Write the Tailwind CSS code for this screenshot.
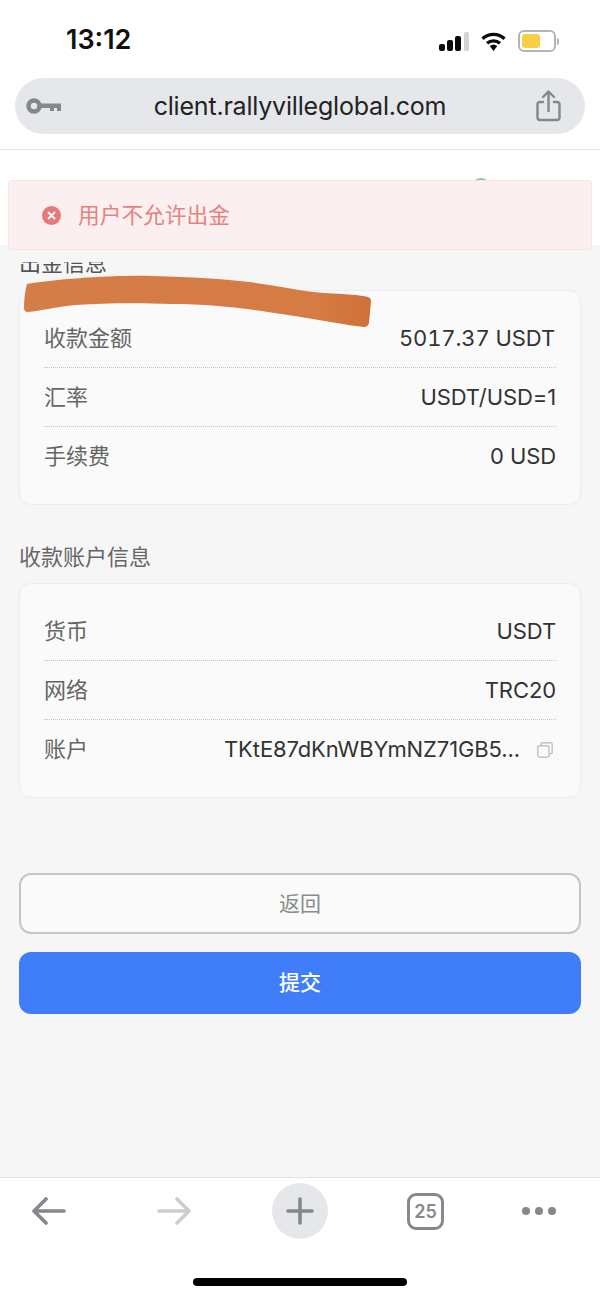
<!DOCTYPE html>
<html lang="zh-CN">
<head>
<meta charset="utf-8"/>
<meta name="viewport" content="width=device-width, initial-scale=1"/>
<title>出金信息</title>
<script src="https://cdn.jsdelivr.net/npm/@tailwindcss/browser@4"></script>
</head>
<body class="relative w-[600px] h-[1298px] overflow-hidden bg-white flex flex-col font-['Inter','Noto_Sans_CJK_SC',sans-serif] text-[#333]">

  <!-- browser chrome, top -->
  <header class="h-[150px] shrink-0 border-b border-[#e4e4e4] px-[15px]">
    <div class="h-[78px] flex items-start justify-between">
      <span class="mt-[24px] ml-[51px] text-[27px] leading-[32px] font-semibold text-[#111]">13:12</span>
      <div class="mt-[30px] mr-[26px] flex items-center gap-[12px]">
        <svg class="w-[30px] h-[19px]" viewBox="0 0 30 19">
          <rect x="0" y="12" width="6" height="7" rx="2" fill="#0b0b0b"/>
          <rect x="8" y="8" width="6" height="11" rx="2" fill="#0b0b0b"/>
          <rect x="16" y="4" width="6" height="15" rx="2" fill="#0b0b0b"/>
          <rect x="25" y="0" width="5" height="19" rx="1.5" fill="#d4d4d4"/>
        </svg>
        <svg class="w-[25px] h-[19px]" viewBox="0 0 25 19">
          <path d="M1.5 6.8 A16 16 0 0 1 23.5 6.8" fill="none" stroke="#0b0b0b" stroke-width="3.4"/>
          <path d="M6 11.3 A10 10 0 0 1 19 11.3" fill="none" stroke="#0b0b0b" stroke-width="3.4"/>
          <path d="M8.7 14 A6 6 0 0 1 16.3 14 L12.5 19 Z" fill="#0b0b0b"/>
        </svg>
        <div class="flex items-center gap-[1px]">
          <div class="w-[38px] h-[22px] rounded-[6px] border-2 border-[#b5b5b5] p-[2px] bg-white">
            <div class="w-[18px] h-full rounded-[3px] bg-[#f6cf47]"></div>
          </div>
          <div class="w-[2px] h-[7px] rounded-r bg-[#b5b5b5]"></div>
        </div>
      </div>
    </div>
    <div class="h-[56px] rounded-full bg-[#e6e7eb] flex items-center justify-between pl-[11px] pr-[24px]">
      <svg class="w-[35px] h-[16px]" viewBox="0 0 35 16">
        <circle cx="8" cy="8" r="5.5" fill="none" stroke="#84878b" stroke-width="4.5"/>
        <path d="M14 5.5 H35 V13 H31 V10 H28 V13 H24 V10 H14 Z" fill="#84878b"/>
      </svg>
      <span class="ml-[3px] text-[25px] leading-[32px] text-[#222] tracking-[-0.2px]">client.rallyvilleglobal.com</span>
      <svg class="w-[25px] h-[32px]" viewBox="0 0 25 32" fill="none" stroke="#84878b" stroke-width="2.4" stroke-linecap="round" stroke-linejoin="round">
        <path d="M7 12 H4 Q1.5 12 1.5 14.5 V27.5 Q1.5 30 4 30 H21 Q23.5 30 23.5 27.5 V14.5 Q23.5 12 21 12 H18"/>
        <path d="M12.5 21 V2 M7 7 L12.5 1.5 L18 7"/>
      </svg>
    </div>
  </header>

  <div class="h-[95px] shrink-0 bg-white"></div>

  <!-- page content -->
  <main class="relative flex-1 bg-[#f6f6f6] px-[19px] pt-[8px]">
    <h2 class="text-[22px] leading-[20px] font-normal text-[#555] mb-[17px]">出金信息</h2>
    <section class="h-[215px] rounded-[12px] border border-[#ececec] bg-[#fafafa] px-[24px] py-[18px]">
      <div class="h-[59px] flex items-center justify-between border-b border-dotted border-[#c4c4c4]">
        <span class="text-[22px] text-[#666]">收款金额</span>
        <span class="mr-[1px] text-[22px] tabular-nums tracking-[-0.1px] text-[#333]">5017.37 USDT</span>
      </div>
      <div class="h-[59px] flex items-center justify-between border-b border-dotted border-[#c4c4c4]">
        <span class="text-[22px] text-[#666]">汇率</span>
        <span class="text-[22px] tracking-[-0.1px] text-[#333]">USDT/USD=1</span>
      </div>
      <div class="h-[59px] flex items-center justify-between">
        <span class="text-[22px] text-[#666]">手续费</span>
        <span class="text-[22px] tracking-[-0.1px] text-[#333]">0 USD</span>
      </div>
    </section>

    <h2 class="mt-[42px] text-[22px] leading-[20px] font-normal text-[#666] mb-[16px]">收款账户信息</h2>
    <section class="h-[215px] rounded-[12px] border border-[#ececec] bg-[#fafafa] px-[24px] py-[18px]">
      <div class="h-[59px] flex items-center justify-between border-b border-dotted border-[#c4c4c4]">
        <span class="text-[22px] text-[#666]">货币</span>
        <span class="text-[22px] tracking-[-0.1px] text-[#333]">USDT</span>
      </div>
      <div class="h-[59px] flex items-center justify-between border-b border-dotted border-[#c4c4c4]">
        <span class="text-[22px] text-[#666]">网络</span>
        <span class="text-[22px] tracking-[-0.1px] text-[#333]">TRC20</span>
      </div>
      <div class="h-[59px] flex items-center justify-between">
        <span class="text-[22px] text-[#666]">账户</span>
        <div class="flex items-center gap-[17px] mr-[3px]">
          <span class="text-[22px] tracking-[-0.1px] text-[#333]">TKtE87dKnWBYmNZ71GB5...</span>
          <svg class="w-[16px] h-[16px]" viewBox="0 0 16 16" fill="none" stroke="#c2c2c2" stroke-width="1.4">
            <rect x="0.8" y="3.8" width="11.2" height="11.4" rx="2"/>
            <path d="M4 3.6 V2.6 Q4 0.8 5.8 0.8 H13.4 Q15.2 0.8 15.2 2.6 V10 Q15.2 11.8 13.4 11.8 H12.2"/>
          </svg>
        </div>
      </div>
    </section>

    <button class="mt-[75px] w-full h-[61px] rounded-[12px] border-2 border-[#c6c6c6] bg-[#fafafa] text-[21px] text-[#8c8c8c]">返回</button>
    <button class="mt-[18px] w-full h-[62px] rounded-[12px] bg-[#3f7ef8] text-[21px] font-medium text-white">提交</button>

    <!-- strip that hides the top of the first heading, as in the capture -->
    <div class="absolute left-0 top-0 w-[200px] h-[17px] bg-[#f6f6f6]"></div>
  </main>

  <!-- browser chrome, bottom -->
  <footer class="relative h-[121px] shrink-0 border-t border-[#e2e2e2] bg-white">
    <div class="h-[62px] mt-[2px] flex items-center pl-[32px]">
      <svg class="w-[34px] h-[28px]" viewBox="0 0 34 28" fill="none" stroke="#84878b" stroke-width="3.6" stroke-linecap="round" stroke-linejoin="round">
        <path d="M32 14 H3 M14 2 L2 14 L14 26"/>
      </svg>
      <svg class="w-[34px] h-[28px] ml-[91px]" viewBox="0 0 34 28" fill="none" stroke="#cdcdcd" stroke-width="3.6" stroke-linecap="round" stroke-linejoin="round">
        <path d="M2 14 H31 M20 2 L32 14 L20 26"/>
      </svg>
      <div class="w-[56px] h-[56px] ml-[81px] rounded-full bg-[#e6e7eb] flex items-center justify-center">
        <svg class="w-[28px] h-[28px]" viewBox="0 0 28 28" fill="none" stroke="#84878b" stroke-width="3.6" stroke-linecap="round">
          <path d="M14 2 V26 M2 14 H26"/>
        </svg>
      </div>
      <div class="w-[37px] h-[37px] ml-[79px] rounded-[9px] border-[3px] border-[#85888c] flex items-center justify-center text-[18px] font-semibold text-[#85888c]">25</div>
      <div class="ml-[78px] flex gap-[5px]">
        <span class="w-[8px] h-[8px] rounded-full bg-[#84878b]"></span>
        <span class="w-[8px] h-[8px] rounded-full bg-[#84878b]"></span>
        <span class="w-[8px] h-[8px] rounded-full bg-[#84878b]"></span>
      </div>
    </div>
    <div class="absolute left-[193px] top-[100px] w-[214px] h-[8px] rounded-full bg-black"></div>
  </footer>

  <!-- green dot peeking out behind the toast -->
  <div class="absolute left-[471px] top-[178px] w-[20px] h-[20px] rounded-full bg-[#7fc9ad]"></div>

  <!-- error toast -->
  <div class="absolute left-[8px] top-[180px] w-[584px] h-[70px] rounded-[4px] border border-[#f8e2e2] bg-[#fbefef] flex items-center pl-[33px] gap-[17px]">
    <svg class="w-[19px] h-[19px]" viewBox="0 0 19 19">
      <circle cx="9.5" cy="9.5" r="9.5" fill="#e8797a"/>
      <path d="M6.5 6.5 L12.5 12.5 M12.5 6.5 L6.5 12.5" stroke="#fff" stroke-width="1.8" stroke-linecap="round"/>
    </svg>
    <span class="text-[21.7px] text-[#e78280]">用户不允许出金</span>
  </div>

  <!-- hand-drawn redaction -->
  <svg class="absolute left-0 top-[270px] w-[380px] h-[65px] blur-[0.6px]" viewBox="0 270 380 65">
    <defs>
      <linearGradient id="marker" x1="0" x2="1" y1="0" y2="0">
        <stop offset="0" stop-color="#d57d47"/>
        <stop offset="0.85" stop-color="#d57b44"/>
        <stop offset="1" stop-color="#cf7038"/>
      </linearGradient>
    </defs>
    <path d="M27 284 C60 279 110 275 153 276 C190 277 225 279 249 282 C280 286 300 291 325 293 C345 294 360 295 368 297 Q371 298 371 301 L369 323 Q368 327 364 327 C345 325 310 318 268 312 C235 307 205 304 172 304 C140 303 105 303 76 305 C55 307 40 311 28 312 Q24 312 24 308 Q24 295 27 284 Z" fill="url(#marker)"/>
  </svg>
</body>
</html>
